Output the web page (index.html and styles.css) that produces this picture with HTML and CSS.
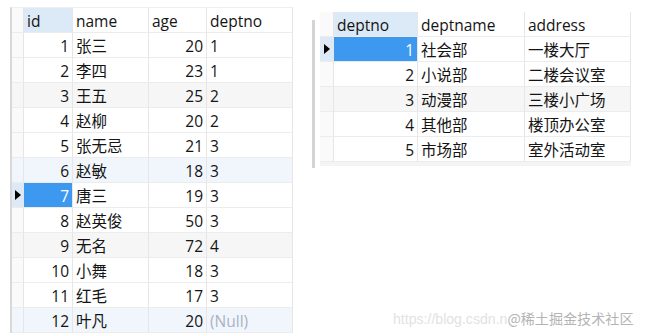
FILE: index.html
```html
<!DOCTYPE html>
<html>
<head>
<meta charset="utf-8">
<link rel="stylesheet" href="styles.css">
</head>
<body>
<div class="page">
  <div class="panel left">
    <div class="grid g-left">
      <div class="c rh hd"></div><div class="c hd hl">id</div><div class="c hd">name</div><div class="c hd">age</div><div class="c hd">deptno</div>

      <div class="c rh"></div><div class="c r">1</div><div class="c">张三</div><div class="c r">20</div><div class="c">1</div>
      <div class="c rh"></div><div class="c r">2</div><div class="c">李四</div><div class="c r">23</div><div class="c">1</div>
      <div class="c rh g"></div><div class="c r g">3</div><div class="c g">王五</div><div class="c r g">25</div><div class="c g">2</div>
      <div class="c rh"></div><div class="c r">4</div><div class="c">赵柳</div><div class="c r">20</div><div class="c">2</div>
      <div class="c rh"></div><div class="c r">5</div><div class="c">张无忌</div><div class="c r">21</div><div class="c">3</div>
      <div class="c rh b"></div><div class="c r b">6</div><div class="c b">赵敏</div><div class="c r b">18</div><div class="c b">3</div>
      <div class="c rh cur"><span class="tri"></span></div><div class="c r sel">7</div><div class="c">唐三</div><div class="c r">19</div><div class="c">3</div>
      <div class="c rh"></div><div class="c r">8</div><div class="c">赵英俊</div><div class="c r">50</div><div class="c">3</div>
      <div class="c rh g"></div><div class="c r g">9</div><div class="c g">无名</div><div class="c r g">72</div><div class="c g">4</div>
      <div class="c rh"></div><div class="c r">10</div><div class="c">小舞</div><div class="c r">18</div><div class="c">3</div>
      <div class="c rh"></div><div class="c r">11</div><div class="c">红毛</div><div class="c r">17</div><div class="c">3</div>
      <div class="c rh b"></div><div class="c r b">12</div><div class="c b">叶凡</div><div class="c r b">20</div><div class="c b null">(Null)</div>
    </div>
  </div>

  <div class="panel right">
    <div class="bar"></div>
    <div class="grid g-right">
      <div class="c rh hd"></div><div class="c hd hl">deptno</div><div class="c hd">deptname</div><div class="c hd">address</div>

      <div class="c rh cur"><span class="tri"></span></div><div class="c r sel">1</div><div class="c">社会部</div><div class="c">一楼大厅</div>
      <div class="c rh"></div><div class="c r">2</div><div class="c">小说部</div><div class="c">二楼会议室</div>
      <div class="c rh g"></div><div class="c r g">3</div><div class="c g">动漫部</div><div class="c g">三楼小广场</div>
      <div class="c rh"></div><div class="c r">4</div><div class="c">其他部</div><div class="c">楼顶办公室</div>
      <div class="c rh"></div><div class="c r">5</div><div class="c">市场部</div><div class="c">室外活动室</div>
    </div>
  </div>
</div>
<div class="wm"><span class="wm1">https://blog.csdn.n</span><span class="wm2">@稀土掘金技术社区</span></div>
</body>
</html>
```

FILE: styles.css
```css
html, body {
  margin: 0;
  padding: 0;
  background: #ffffff;
}
body {
  width: 645px;
  height: 336px;
  overflow: hidden;
  position: relative;
  font-family: "Open Sans", "Noto Sans CJK SC", sans-serif;
  font-size: 15.5px;
  color: #141414;
}
.page {
  display: flex;
  align-items: flex-start;
  padding-top: 8px;
}
.panel.left {
  margin-left: 10px;
  border-left: 2px solid #d9d9d9;
  border-top: 1px solid #eeeeee;
  margin-top: -1px;
}
.panel.right {
  display: flex;
  align-items: flex-start;
  margin-left: 19px;
}
.bar {
  width: 3px;
  height: 148px;
  margin-top: 12px;
  background: #d4d4d4;
  margin-right: 5px;
}
.grid {
  display: grid;
}
.g-left {
  grid-template-columns: 12px 49px 76px 58px 86px;
}
.g-right {
  margin-top: 4px;
  grid-template-columns: 14px 84px 107px 106px;
  border-bottom: 4px solid #f4f4f4;
}
.c {
  box-sizing: border-box;
  height: 25px;
  line-height: 23px;
  padding: 2px 3px 0 3px;
  border-right: 1px solid #e6e6e6;
  border-bottom: 1px solid #ececec;
  white-space: nowrap;
  overflow: hidden;
}
.c.r { text-align: right; }
.c.hd { background: #ffffff; }
.c.hl { background: #dce9f7; }
.c.rh {
  padding: 0;
  background: #fafafa;
  position: relative;
}
.c.g { background: #f6f6f6; }
.c.b { background: #f1f6fc; }
.c.sel { background: #3d98f0; color: #ffffff; }
.c.cur { background: #dde9f6; }
.c.null { color: #a9b3c4; }
.tri {
  position: absolute;
  left: 3px;
  top: 7px;
  width: 0;
  height: 0;
  border-top: 5px solid transparent;
  border-bottom: 5px solid transparent;
  border-left: 6px solid #000000;
}
.g-right .tri { left: 4px; }
.wm {
  position: absolute;
  left: 393px;
  top: 308px;
  font-size: 14.1px;
  white-space: nowrap;
}
.wm1 { color: #e2e2e2; font-family: "Liberation Sans", sans-serif; }
.wm2 { color: #b4b4b4; font-family: "Noto Sans CJK SC", sans-serif; }
```
